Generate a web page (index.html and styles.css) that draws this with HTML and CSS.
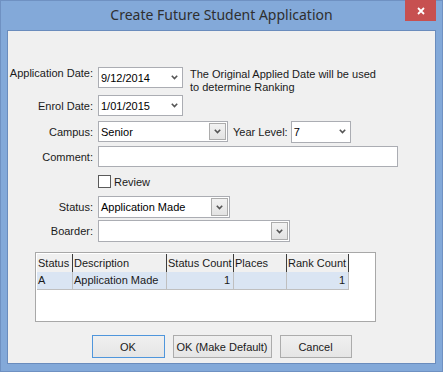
FILE: index.html
```html
<!DOCTYPE html>
<html>
<head>
<meta charset="utf-8">
<link rel="stylesheet" href="styles.css">
</head>
<body>
<div class="window">
  <div class="titlebar">
    <div></div>
    <div class="title">Create Future Student Application</div>
    <div class="close">
      <svg width="8" height="8" viewBox="0 0 8 8"><path d="M1 1 L7 7 M7 1 L1 7" stroke="#fff" stroke-width="1.8" fill="none"/></svg>
    </div>
  </div>
  <div class="client">
    <div class="form">
      <div class="row r1">
        <span class="lbl">Application Date:</span>
        <div class="combo w-date"><span class="val">9/12/2014</span><svg class="chev" width="7" height="5" viewBox="0 0 7 5"><polyline points="0.8,0.8 3.5,3.6 6.2,0.8" stroke="#555" stroke-width="1.6" fill="none"/></svg></div>
        <div class="note">The Original Applied Date will be used<br>to determine Ranking</div>
      </div>
      <div class="row r2">
        <span class="lbl">Enrol Date:</span>
        <div class="combo w-date"><span class="val">1/01/2015</span><svg class="chev" width="7" height="5" viewBox="0 0 7 5"><polyline points="0.8,0.8 3.5,3.6 6.2,0.8" stroke="#555" stroke-width="1.6" fill="none"/></svg></div>
      </div>
      <div class="row r3">
        <span class="lbl">Campus:</span>
        <div class="combo w-campus"><span class="val">Senior</span><span class="dd"><svg width="7" height="5" viewBox="0 0 7 5"><polyline points="0.8,0.8 3.5,3.6 6.2,0.8" stroke="#555" stroke-width="1.6" fill="none"/></svg></span></div>
        <span class="lbl2">Year Level:</span>
        <div class="combo w-year"><span class="val">7</span><svg class="chev" width="7" height="5" viewBox="0 0 7 5"><polyline points="0.8,0.8 3.5,3.6 6.2,0.8" stroke="#555" stroke-width="1.6" fill="none"/></svg></div>
      </div>
      <div class="row r4">
        <span class="lbl">Comment:</span>
        <div class="combo w-comment"></div>
      </div>
      <div class="row r5">
        <span class="lbl"></span>
        <span class="check"></span><span class="check-text">Review</span>
      </div>
      <div class="row r6">
        <span class="lbl">Status:</span>
        <div class="combo w-status"><span class="val">Application Made</span><span class="dd"><svg width="7" height="5" viewBox="0 0 7 5"><polyline points="0.8,0.8 3.5,3.6 6.2,0.8" stroke="#555" stroke-width="1.6" fill="none"/></svg></span></div>
      </div>
      <div class="row r7">
        <span class="lbl">Boarder:</span>
        <div class="combo w-boarder"><span class="val"></span><span class="dd"><svg width="7" height="5" viewBox="0 0 7 5"><polyline points="0.8,0.8 3.5,3.6 6.2,0.8" stroke="#555" stroke-width="1.6" fill="none"/></svg></span></div>
      </div>
    </div>
    <div class="grid">
      <div class="gtable">
        <div class="hc">Status</div>
        <div class="hc">Description</div>
        <div class="hc">Status Count</div>
        <div class="hc">Places</div>
        <div class="hc">Rank Count</div>
        <div class="dc">A</div>
        <div class="dc">Application Made</div>
        <div class="dc num">1</div>
        <div class="dc"></div>
        <div class="dc num">1</div>
      </div>
    </div>
    <div class="buttons">
      <div class="btn default b-ok">OK</div>
      <div class="btn b-okd">OK (Make Default)</div>
      <div class="btn b-cancel">Cancel</div>
    </div>
  </div>
</div>
</body>
</html>
```

FILE: styles.css
```css
html, body {
  margin: 0;
  padding: 0;
}
body {
  font-family: "Liberation Sans", Arial, sans-serif;
  font-size: 11px;
  color: #000;
  background: #fff;
}
.window {
  width: 441px;
  height: 370px;
  border: 1px solid #6f91c2;
  background: #83a9d9;
  display: flex;
  flex-direction: column;
}
.titlebar {
  height: 29px;
  flex: none;
  display: grid;
  grid-template-columns: 1fr auto 1fr;
}
.title {
  font-family: "Noto Sans", "Open Sans", sans-serif;
  font-size: 14px;
  line-height: 19px;
  color: #2f2f2f;
  padding-top: 4px;
  white-space: nowrap;
}
.close {
  justify-self: end;
  width: 31px;
  height: 21px;
  margin-top: -1px;
  margin-right: 6px;
  background: #c75050;
  display: flex;
  align-items: center;
  justify-content: center;
  padding-top: 1px;
  box-sizing: border-box;
}
.client {
  margin: 0 6px;
  height: 332px;
  border: 1px solid #6a8cbd;
  background: #f0f0f0;
  flex: none;
}
.form {
  padding-top: 36px;
}
.row {
  display: flex;
  align-items: center;
  height: 21px;
}
.r2 { margin-top: 7px; }
.r3 { margin-top: 5px; }
.r4 { margin-top: 4px; }
.r5 { margin-top: 8px; height: 13px; }
.r6 { margin-top: 8px; height: 22px; }
.r7 { margin-top: 2px; height: 22px; }
.lbl {
  flex: none;
  width: 85px;
  margin-right: 5px;
  text-align: right;
  white-space: nowrap;
  color: #1a1a1a;
}
.lbl2 {
  margin-left: 5px;
  margin-right: 3px;
  white-space: nowrap;
  color: #1a1a1a;
}
.combo {
  box-sizing: border-box;
  height: 100%;
  border: 1px solid #abadb3;
  background: #fff;
  display: flex;
  align-items: center;
  padding-left: 2px;
  flex: none;
}
.combo .val {
  flex: 1;
  white-space: nowrap;
}
.chev {
  margin-right: 4px;
  flex: none;
}
.dd {
  flex: none;
  box-sizing: border-box;
  width: 17px;
  height: calc(100% - 2px);
  margin-right: 1px;
  border: 1px solid #acacac;
  background: linear-gradient(#f2f2f2, #e3e3e3);
  display: flex;
  align-items: center;
  justify-content: center;
}
.w-date { width: 85px; }
.w-campus { width: 130px; }
.w-year { width: 60px; height: 22px; }
.w-comment { width: 300px; }
.w-status { width: 132px; }
.w-boarder { width: 192px; }
.r1 { align-items: flex-start; }
.note {
  margin-left: 7px;
  margin-top: 1px;
  line-height: 13px;
  white-space: nowrap;
  color: #1a1a1a;
}
.check {
  box-sizing: border-box;
  width: 13px;
  height: 13px;
  border: 1px solid #5a5a5a;
  background: #fff;
  flex: none;
}
.check-text {
  margin-left: 3px;
  color: #1a1a1a;
}
.grid {
  margin-top: 10px;
  margin-left: 27px;
  width: 341px;
  height: 70px;
  box-sizing: border-box;
  border: 1px solid #a8a8a8;
  background: #fff;
  padding: 1px;
}
.gtable {
  display: grid;
  grid-template-columns: 36px 94px 67px 53px 62px;
  grid-template-rows: 18px 18px;
}
.hc {
  background: #f0f0f0;
  border-right: 1px solid #3c3c3c;
  padding-left: 1px;
  line-height: 18px;
  white-space: nowrap;
  overflow: hidden;
  color: #1a1a1a;
}
.dc {
  background: #dae5f3;
  border-right: 1px solid #bfbfbf;
  border-bottom: 1px solid #bfbfbf;
  padding-left: 1px;
  padding-right: 3px;
  line-height: 17px;
  white-space: nowrap;
  overflow: hidden;
  color: #1a1a1a;
}
.dc.num {
  text-align: right;
}
.buttons {
  margin-top: 13px;
  display: flex;
  justify-content: center;
  gap: 8px;
}
.btn {
  box-sizing: border-box;
  height: 23px;
  border: 1px solid #acacac;
  background: linear-gradient(#f0f0f0, #e5e5e5);
  display: flex;
  align-items: center;
  justify-content: center;
  color: #1a1a1a;
  white-space: nowrap;
}
.btn.default {
  border-color: #4f96dc;
}
.b-ok { width: 73px; }
.b-okd { width: 99px; }
.b-cancel { width: 72px; }
```
